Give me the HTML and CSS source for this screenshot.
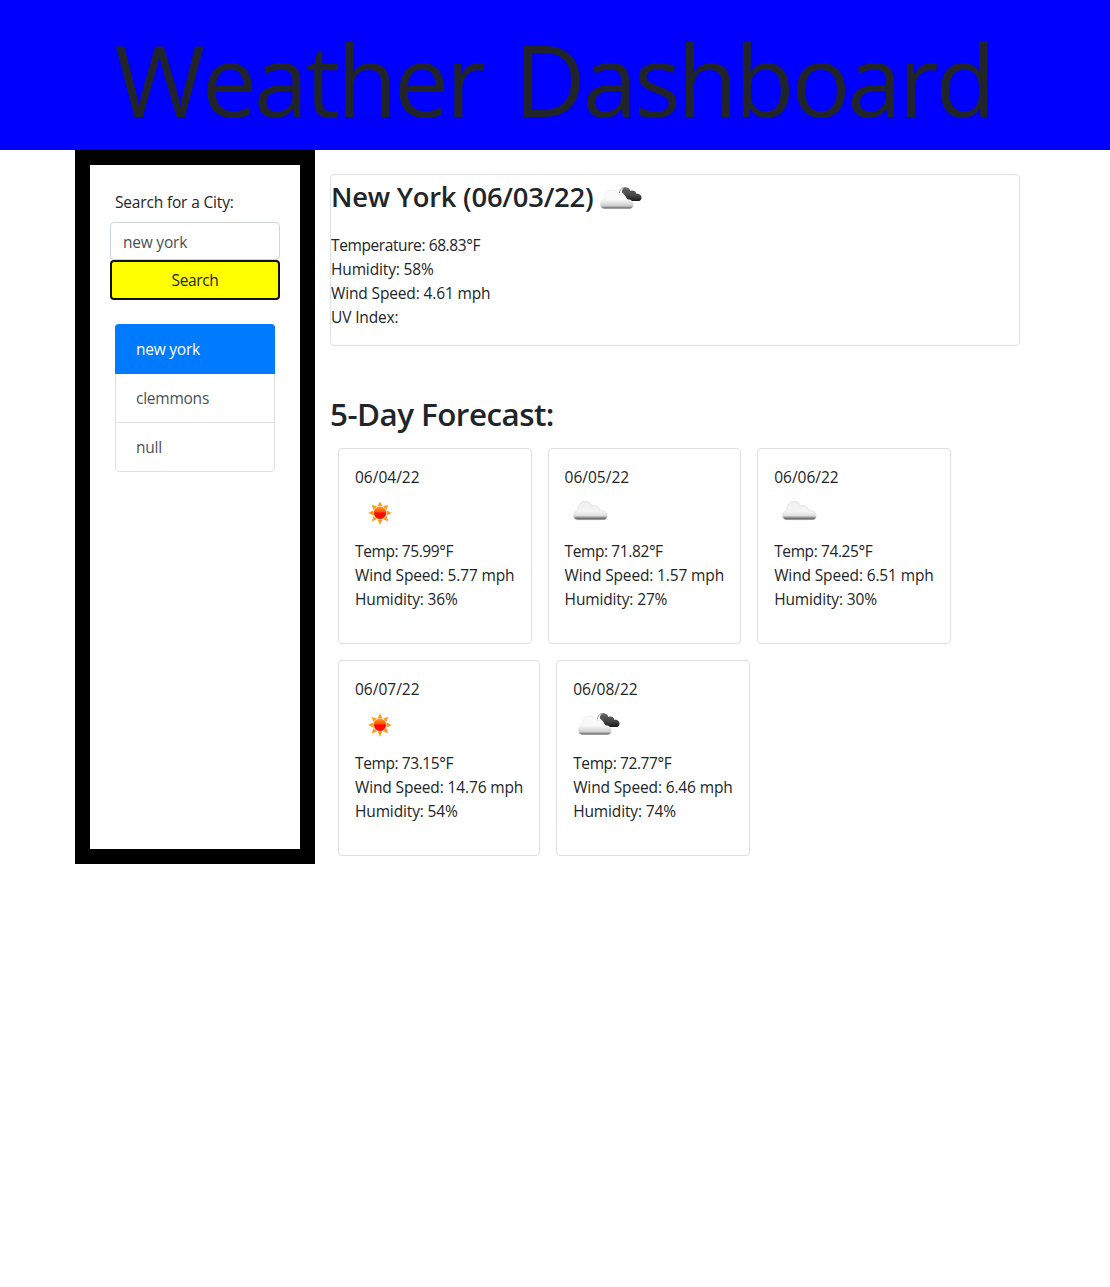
FILE: index.html
```html
<!DOCTYPE html>
<html lang="en">
<head>
<meta charset="utf-8">
<title>Weather Dashboard</title>
<link rel="stylesheet" href="styles.css">
</head>
<body>
<svg class="defs" width="0" height="0" aria-hidden="true">
  <defs>
    <linearGradient id="cloudFill" x1="0" y1="0" x2="0" y2="1">
      <stop offset="0" stop-color="#eeeeee"/><stop offset=".55" stop-color="#f5f5f5"/><stop offset=".8" stop-color="#dedede"/><stop offset=".86" stop-color="#999"/><stop offset="1" stop-color="#555"/>
    </linearGradient>
    <linearGradient id="frontFill" x1="0" y1="0" x2="0" y2="1">
      <stop offset="0" stop-color="#fafafa"/><stop offset=".5" stop-color="#fafafa"/><stop offset=".85" stop-color="#cccccc"/><stop offset=".92" stop-color="#888"/><stop offset="1" stop-color="#666"/>
    </linearGradient>
    <linearGradient id="darkFill" x1="0" y1="0" x2="0" y2="1">
      <stop offset="0" stop-color="#666"/><stop offset=".6" stop-color="#424242"/><stop offset="1" stop-color="#181818"/>
    </linearGradient>
    <linearGradient id="sunFill" x1="0" y1="0" x2="0" y2="1">
      <stop offset="0" stop-color="#ff9d1c"/><stop offset=".4" stop-color="#fa5208"/><stop offset=".5" stop-color="#ff0a00"/><stop offset="1" stop-color="#ff0800"/>
    </linearGradient>
    <symbol id="sun" viewBox="0 0 50 50">
      <g fill="#ff9c1c">
        <path id="ray" d="M25 13.2l2.4 5h-4.8z"/>
        <use href="#ray" transform="rotate(45 25 25)"/><use href="#ray" transform="rotate(90 25 25)"/><use href="#ray" transform="rotate(135 25 25)"/><use href="#ray" transform="rotate(180 25 25)"/><use href="#ray" transform="rotate(225 25 25)"/><use href="#ray" transform="rotate(270 25 25)"/><use href="#ray" transform="rotate(315 25 25)"/>
      </g>
      <circle cx="25" cy="25" r="6.2" fill="url(#sunFill)" stroke="#f0922a" stroke-width=".6"/>
    </symbol>
    <symbol id="cloud" viewBox="0 0 50 50">
      <path fill="url(#cloudFill)" stroke="#c8c8c8" stroke-opacity=".6" stroke-width=".6" d="M12 31.7C9.7 31.2 8.4 29.4 8.6 27.2C8.7 24.8 10.5 23 13 22.6C12.6 17 15.8 13.2 20 13.3C23.2 13.3 25.8 15 26.8 18.2C30 16.4 34.4 18 34.6 22.7C38.6 22.1 42.5 24 42.2 27.8C42.1 29.9 41.2 31.2 39.4 31.7Z"/>
    </symbol>
    <symbol id="clouds" viewBox="-0.7 0 50 50">
      <path fill="url(#darkFill)" d="M26.4 18.5C25.8 15.5 28 13 31 13.6C33.1 14 34.2 15.4 34.5 17.1C37.3 15.8 40.3 17.2 40.7 19.8C43.8 19.5 46 21.5 45.8 24C45.6 26 44.2 27.1 42.4 27.1L35 27C31.8 26.4 30.3 23.4 29 21Z"/>
      <path fill="none" stroke="#777" stroke-width=".8" d="M23.7 19.2C24.2 15.2 26.9 12.7 30.5 13.5"/>
      <path fill="url(#frontFill)" stroke="#d0d0d0" stroke-opacity=".6" stroke-width=".5" d="M8.3 34.8C6 34.2 4.3 32.3 4.6 29.8C4.8 27.3 6.5 25.4 9 25.1C8.2 20.2 11.5 16.1 16.1 16.1C19.6 16.1 22 18 23 20.9C27 19.1 30.5 21.7 30.5 25.6C34.6 24.9 37.8 27.1 37.6 30.7C37.4 33 36.3 34.4 34.3 34.8Z"/>
    </symbol>
  </defs>
</svg>
<header class="banner"><h1 class="banner-title">Weather Dashboard</h1></header>
<main class="container">
  <aside class="sidebar">
    <label class="search-label" for="city">Search for a City:</label>
    <input class="search-input" id="city" type="text" value="new york">
    <button class="search-button" type="button">Search</button>
    <ul class="history">
      <li class="history-item active">new york</li>
      <li class="history-item">clemmons</li>
      <li class="history-item">null</li>
    </ul>
  </aside>
  <section class="content">
    <article class="current">
      <h3 class="current-title"><span class="city-name">New York (06/03/22)</span><svg class="icon"><use href="#clouds"/></svg></h3>
      <p class="line temp">Temperature: 68.83°F</p>
      <p class="line">Humidity: 58%</p>
      <p class="line">Wind Speed: 4.61 mph</p>
      <p class="line">UV Index:</p>
    </article>
    <h2 class="forecast-title">5-Day Forecast:</h2>
    <div class="forecast">
      <article class="day"><p class="line date">06/04/22</p><svg class="icon"><use href="#sun"/></svg><p class="line temp">Temp: 75.99°F</p><p class="line">Wind Speed: 5.77 mph</p><p class="line">Humidity: 36%</p></article>
      <article class="day"><p class="line date">06/05/22</p><svg class="icon"><use href="#cloud"/></svg><p class="line temp">Temp: 71.82°F</p><p class="line">Wind Speed: 1.57 mph</p><p class="line">Humidity: 27%</p></article>
      <article class="day"><p class="line date">06/06/22</p><svg class="icon"><use href="#cloud"/></svg><p class="line temp">Temp: 74.25°F</p><p class="line">Wind Speed: 6.51 mph</p><p class="line">Humidity: 30%</p></article>
      <article class="day day-wide"><p class="line date">06/07/22</p><svg class="icon"><use href="#sun"/></svg><p class="line temp">Temp: 73.15°F</p><p class="line">Wind Speed: 14.76 mph</p><p class="line">Humidity: 54%</p></article>
      <article class="day"><p class="line date">06/08/22</p><svg class="icon"><use href="#clouds"/></svg><p class="line temp">Temp: 72.77°F</p><p class="line">Wind Speed: 6.46 mph</p><p class="line">Humidity: 74%</p></article>
    </div>
  </section>
</main>
</body>
</html>
```
FILE: styles.css
```css
*, *::before, *::after { box-sizing: border-box; }
body {
  margin: 0;
  background: #fff;
  color: #212529;
  font: 400 15.5px/24px "Open Sans", "Noto Sans", sans-serif;
  letter-spacing: -0.14px;
}
h1, h2, h3, p, ul { margin: 0; padding: 0; }
.defs { position: absolute; }
.banner { height: 150px; background: #00f; text-align: center; }
.banner-title { font-size: 98px; font-weight: 400; line-height: 150px; letter-spacing: -3.1px; word-spacing: 9.3px; white-space: nowrap; padding: 4px 3px 0 0; }
.container { display: flex; width: 960px; margin: 0 auto; }
.sidebar { width: 240px; height: 714px; border: 15px solid #000; padding: 25px 20px 0; display: flex; flex-direction: column; }
.search-label { height: 32px; padding-left: 5px; letter-spacing: -0.17px; }
.search-input {
  height: 38px; padding: 2px 12px 0; border: 1px solid #ced4da; border-radius: 4px;
  background: #fff; color: #495057; font: inherit; letter-spacing: -0.22px; width: 100%;
}
.search-button {
  height: 40px; padding: 0; border: 2px solid #101010; border-radius: 4px;
  background: #ff0; color: #212529; font: inherit; letter-spacing: -0.35px;
}
.history { list-style: none; margin: 24px 5px 0; border: 1px solid #dfdfdf; border-radius: 4px; height: 148px; letter-spacing: -0.24px; }
.history-item { height: 49px; padding: 12px 20px; color: #495057; border-bottom: 1px solid #dfdfdf; }
.history-item:last-child { border-bottom: 0; }
.history-item.active { height: 50px; margin: -1px -1px 0; padding: 13px 21px; background: #007bff; color: #fff; border: 0; border-radius: 4px 4px 0 0; }
.content { flex: 1; padding: 24px 15px 0; }
.current { height: 172px; border: 1px solid #dee2e6; border-radius: 4px; }
.current-title { display: flex; height: 58px; font-size: 27.4px; font-weight: 600; line-height: 44px; letter-spacing: -0.24px; }
.city-name { width: 264px; white-space: nowrap; }
.icon { display: block; width: 50px; height: 50px; flex: none; }
.current-title .icon { margin-top: -1px; }
.line { height: 24px; white-space: nowrap; }
.temp { letter-spacing: -0.4px; }
.date { letter-spacing: 0; }
.forecast-title { margin-top: 50px; height: 52px; font-size: 31.4px; font-weight: 600; line-height: 36px; letter-spacing: -0.53px; }
.forecast { display: flex; flex-wrap: wrap; gap: 16px; padding-left: 8px; }
.day { width: 193.6px; height: 196px; border: 1px solid #dfdfdf; border-radius: 4px; padding: 16px; }
.day-wide { width: 202.2px; }
.day .icon { margin-top: -1px; margin-bottom: 1px; }
```
